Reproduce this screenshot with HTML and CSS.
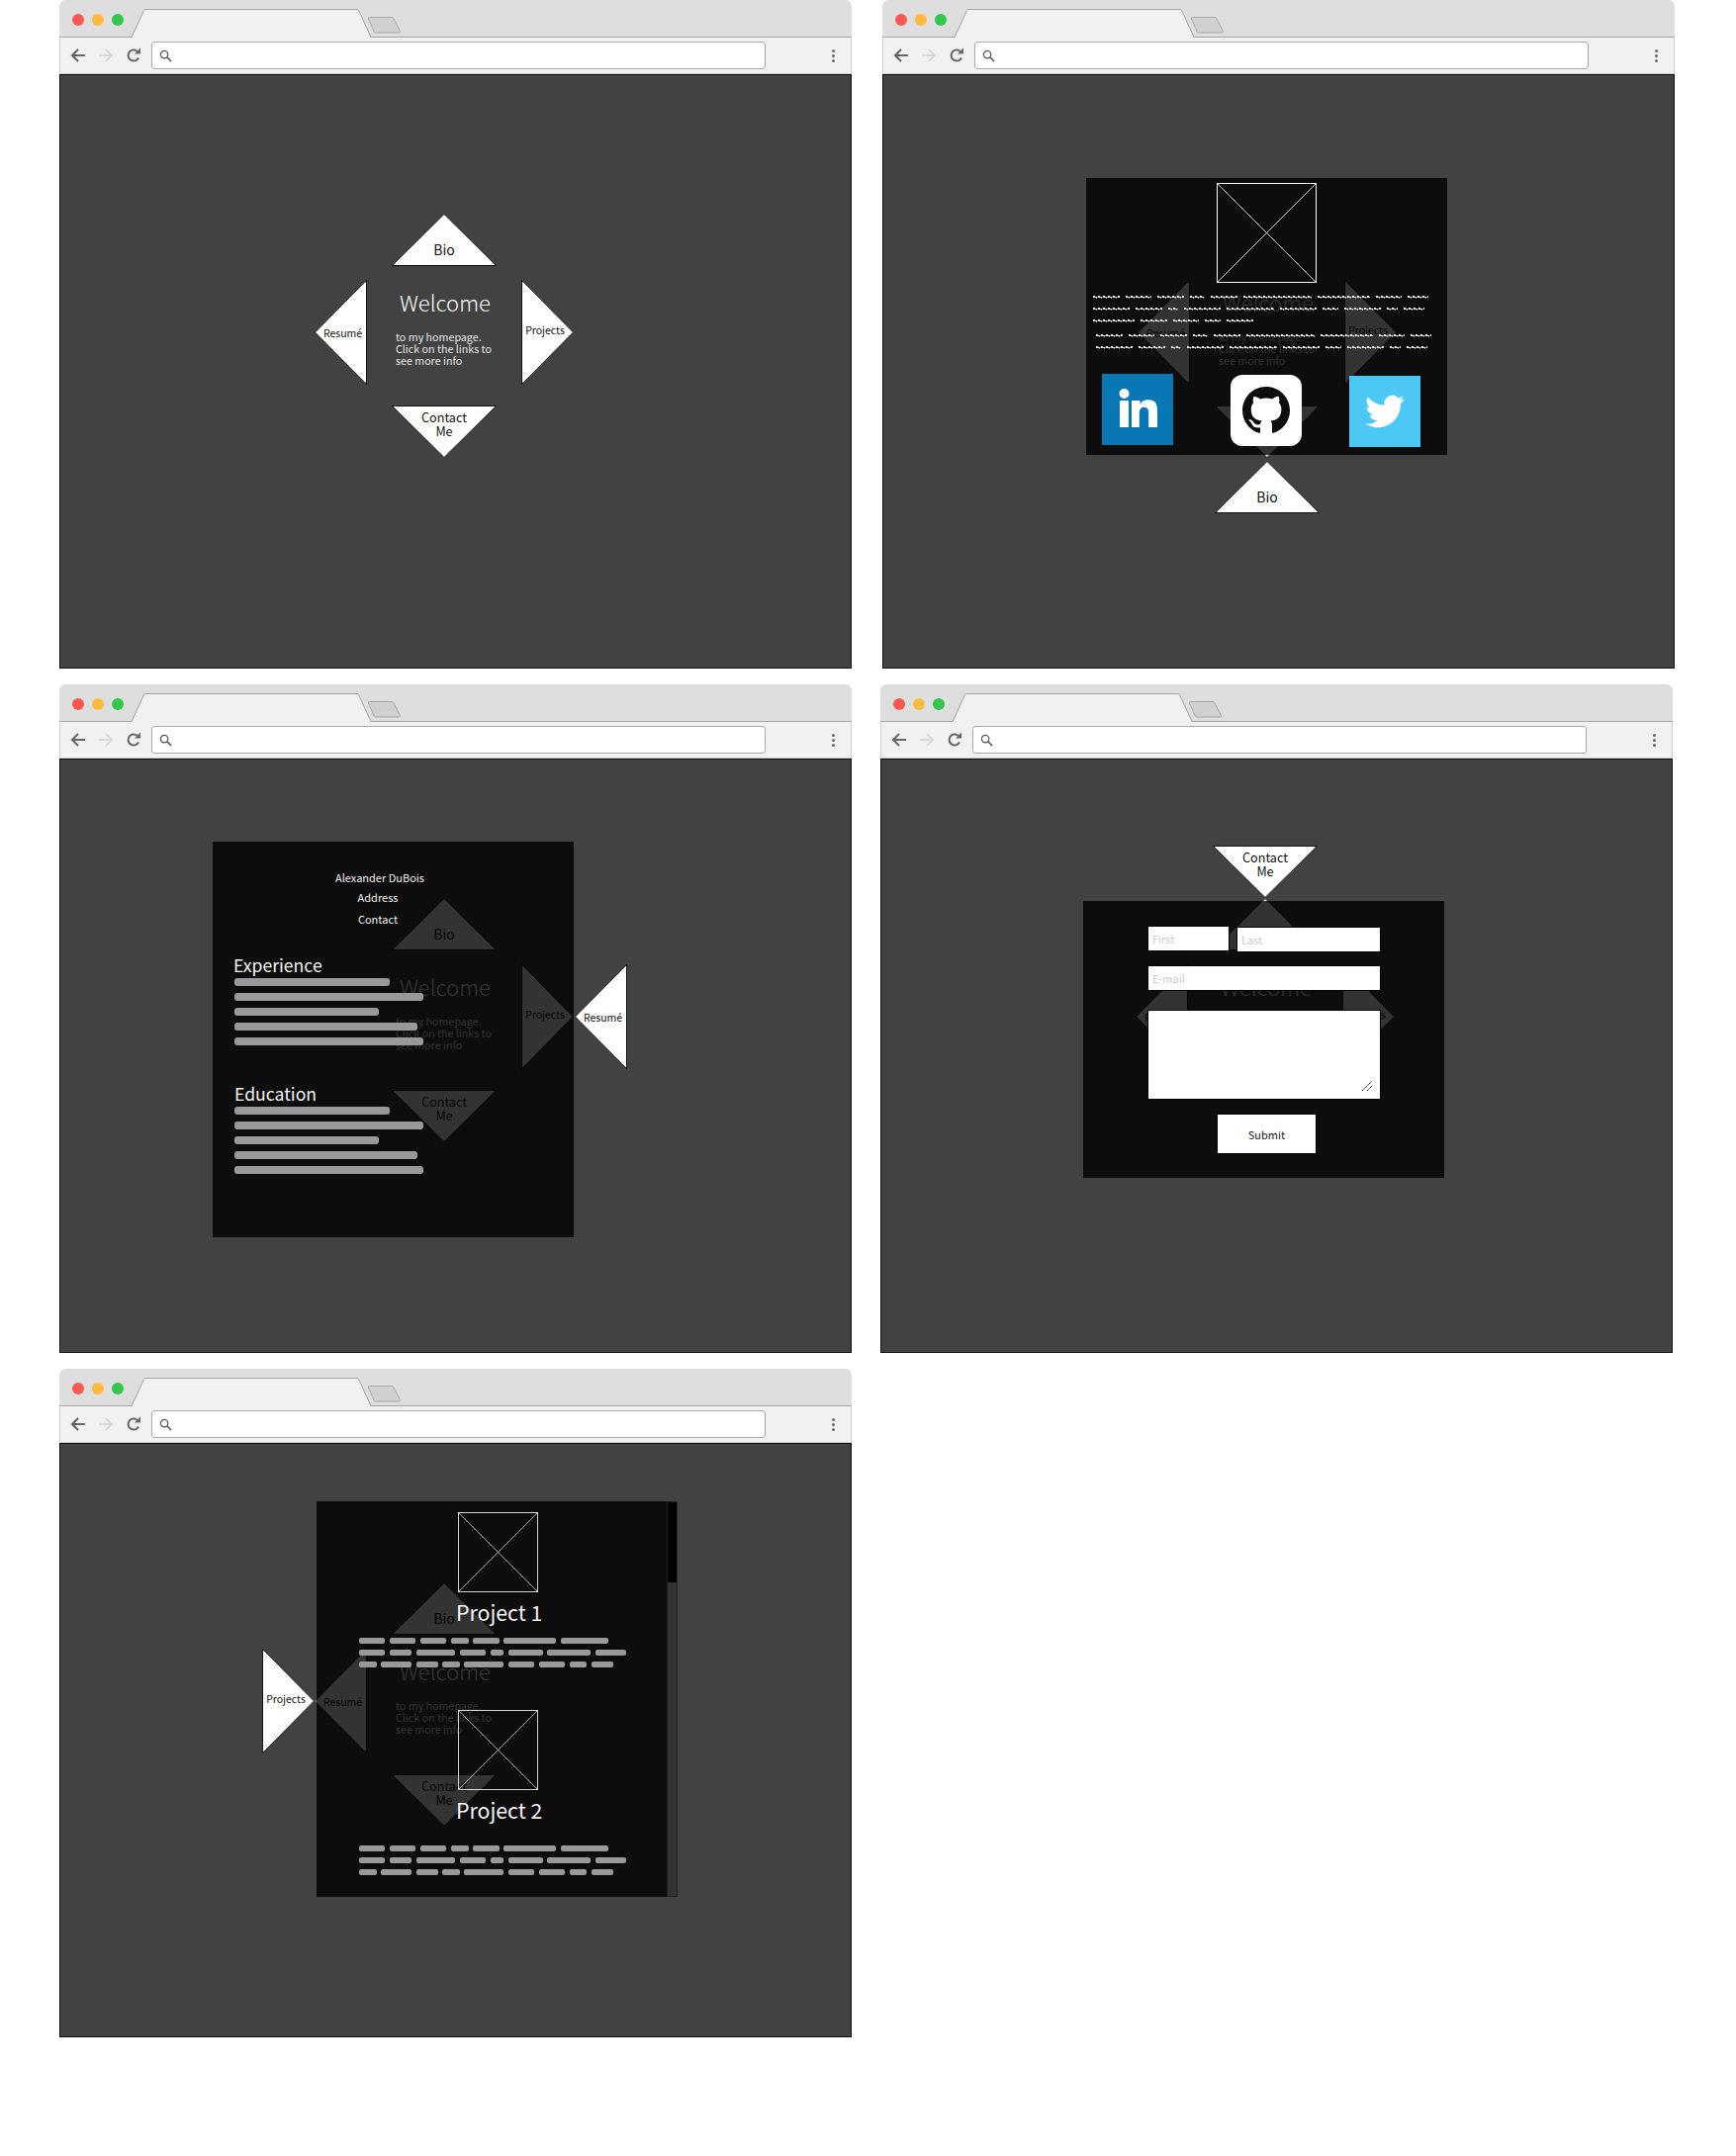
FILE: index.html
```html
<!DOCTYPE html>
<html lang="en">
<head>
  <meta charset="UTF-8">
  <title>Homepage wireframes</title>
  <meta name="viewport" content="width=device-width, initial-scale=1.0">
  <link rel="stylesheet" href="styles.css">
</head>
<body>

  <svg class="defs" width="0" height="0">
    <symbol id="tab" viewBox="0 0 280 29">
      <path d="M3 29L15.5 1.5Q16 .5 17 .5H231Q232 .5 232.500 1.500L245 29Z" fill="#f1f1f1"/>
      <path d="M0 28.500H3L15.500 1.500Q16 .5 17 .5H231Q232 .5 232.500 1.500L245 28.500H280" fill="none" stroke="#a3a3a3"/>
      <path d="M243.500 8.500H266Q267.500 8.500 268 10L274.500 22.500Q275 24 273.500 24H250Q248.500 24 248 22.500L242.500 10Q242 8.500 243.500 8.500Z" fill="#d0d0d0" stroke="#a8a8a8"/>
    </symbol>
    <symbol id="arrow" viewBox="0 0 16 14">
      <path d="M15 7H2M8 1L2 7L8 13" fill="none" stroke="currentColor" stroke-width="2"/>
    </symbol>
    <symbol id="reload" viewBox="0 0 16 16">
      <path d="M13 10.500A5.500 5.500 0 1 1 11.800 4" fill="none" stroke="currentColor" stroke-width="2"/>
      <path d="M9 6.500H15V.5Z" fill="currentColor"/>
    </symbol>
    <symbol id="search" viewBox="0 0 14 14">
      <circle cx="5.500" cy="5.500" r="4" fill="none" stroke="currentColor" stroke-width="1.300"/>
      <path d="M8.500 8.500L13 13" stroke="currentColor" stroke-width="1.600"/>
    </symbol>
    <symbol id="tri-up" viewBox="0 0 106 54">
      <polygon points="53,.5 105.500,52.500 .5,52.500" fill="#fff" stroke="#222"/>
      <path d="M.5 52.500H105.500" stroke="#000" stroke-dasharray="1 1"/>
    </symbol>
    <symbol id="tri-down" viewBox="0 0 106 54">
      <polygon points=".5,.5 105.500,.5 53,52.500" fill="#fff" stroke="#222"/>
      <path d="M.5 .5H105.500" stroke="#000" stroke-dasharray="1 1"/>
    </symbol>
    <symbol id="tri-left" viewBox="0 0 54 106">
      <polygon points=".5,53 52.500,.5 52.500,105.500" fill="#fff" stroke="#222"/>
      <path d="M52.500 .5V105.500" stroke="#000" stroke-dasharray="1 1"/>
    </symbol>
    <symbol id="tri-right" viewBox="0 0 54 106">
      <polygon points=".5,.5 52.500,53 .5,105.500" fill="#fff" stroke="#222"/>
      <path d="M.5 .5V105.500" stroke="#000" stroke-dasharray="1 1"/>
    </symbol>
    <symbol id="placeholder" viewBox="0 0 100 100">
      <rect x=".5" y=".5" width="99" height="99" fill="none" stroke="#fff"/>
      <path d="M0 0L100 100M100 0L0 100" stroke="#fff" stroke-width=".8"/>
    </symbol>
  </svg>

  <div class="sheet">

    <!-- home -->
    <section class="window">
      <div class="titlebar">
        <i class="dot dot-red"></i><i class="dot dot-yellow"></i><i class="dot dot-green"></i>
        <svg class="tab"><use href="#tab"/></svg>
      </div>
      <div class="toolbar">
        <svg class="ico back"><use href="#arrow"/></svg>
        <svg class="ico forward"><use href="#arrow"/></svg>
        <svg class="ico reload"><use href="#reload"/></svg>
        <div class="address"><svg class="ico-search"><use href="#search"/></svg></div>
        <div class="menu"><i></i><i></i><i></i></div>
      </div>
      <div class="viewport">
        <div class="home">
          <div class="intro">
            <h1>Welcome</h1>
            <p>to my homepage.<br>Click on the links to<br>see more info</p>
          </div>
          <a class="tri tri-bio"><svg><use href="#tri-up"/></svg><span>Bio</span></a>
          <a class="tri tri-resume"><svg><use href="#tri-left"/></svg><span>Resumé</span></a>
          <a class="tri tri-projects"><svg><use href="#tri-right"/></svg><span>Projects</span></a>
          <a class="tri tri-contact"><svg><use href="#tri-down"/></svg><span>Contact<br>Me</span></a>
        </div>
      </div>
    </section>

    <!-- bio -->
    <section class="window">
      <div class="titlebar">
        <i class="dot dot-red"></i><i class="dot dot-yellow"></i><i class="dot dot-green"></i>
        <svg class="tab"><use href="#tab"/></svg>
      </div>
      <div class="toolbar">
        <svg class="ico back"><use href="#arrow"/></svg>
        <svg class="ico forward"><use href="#arrow"/></svg>
        <svg class="ico reload"><use href="#reload"/></svg>
        <div class="address"><svg class="ico-search"><use href="#search"/></svg></div>
        <div class="menu"><i></i><i></i><i></i></div>
      </div>
      <div class="viewport">
        <div class="home">
          <div class="intro">
            <h1>Welcome</h1>
            <p>to my homepage.<br>Click on the links to<br>see more info</p>
          </div>
          <a class="tri tri-resume"><svg><use href="#tri-left"/></svg><span>Resumé</span></a>
          <a class="tri tri-projects"><svg><use href="#tri-right"/></svg><span>Projects</span></a>
          <a class="tri tri-contact"><svg><use href="#tri-down"/></svg><span>Contact<br>Me</span></a>
        </div>
        <div class="panel panel-bio">
          <svg class="bio-photo"><use href="#placeholder"/></svg>
          <div class="scribble">
            <div class="line"><b class="w5"></b><b class="w5"></b><b class="w5"></b><b class="w3"></b><b class="w5"></b><b class="w13"></b><b class="w10"></b><b class="w5"></b><b class="w4"></b></div>
            <div class="line"><b class="w7"></b><b class="w5"></b><b class="w2"></b><b class="w7"></b><b class="w9"></b><b class="w7"></b><b class="w3"></b><b class="w7"></b><b class="w2"></b><b class="w4"></b></div>
            <div class="line"><b class="w8"></b><b class="w5"></b><b class="w5"></b><b class="w3"></b><b class="w5"></b></div>
          </div>
          <div class="scribble scribble-second">
            <div class="line"><b class="w5"></b><b class="w5"></b><b class="w5"></b><b class="w3"></b><b class="w5"></b><b class="w13"></b><b class="w10"></b><b class="w5"></b><b class="w4"></b></div>
            <div class="line"><b class="w7"></b><b class="w5"></b><b class="w2"></b><b class="w7"></b><b class="w9"></b><b class="w7"></b><b class="w3"></b><b class="w7"></b><b class="w2"></b><b class="w4"></b></div>
          </div>
          <div class="socials">
            <svg class="social" viewBox="0 0 72 72">
              <rect width="72" height="72" fill="#0a77b5"/>
              <circle cx="22.500" cy="20" r="5" fill="#fff"/>
              <rect x="18" y="27" width="9" height="27" fill="#fff"/>
              <path d="M30 27h8.500v3.700c1.200-2.300 4-4.400 8.200-4.400 8.800 0 9.300 5.800 9.300 13.300V54h-8.800V41c0-3.200-.1-7.200-4.400-7.200s-5 3.400-5 7V54H30z" fill="#fff"/>
            </svg>
            <div class="social github">
              <svg viewBox="0 0 16 16"><path d="M8 0C3.580 0 0 3.580 0 8c0 3.540 2.290 6.530 5.470 7.590.4.070.55-.17.55-.38 0-.19-.01-.82-.01-1.490-2.010.37-2.530-.49-2.690-.94-.09-.23-.48-.94-.82-1.130-.28-.15-.68-.52-.01-.53.63-.01 1.080.58 1.230.82.72 1.210 1.870.87 2.330.66.070-.52.28-.87.51-1.070-1.780-.2-3.640-.89-3.640-3.950 0-.87.31-1.590.82-2.150-.08-.2-.36-1.020.08-2.120 0 0 .67-.21 2.200.82.64-.18 1.320-.27 2-.27.68 0 1.360.09 2 .27 1.530-1.040 2.200-.82 2.200-.82.44 1.100.16 1.920.08 2.120.51.56.82 1.270.82 2.150 0 3.070-1.870 3.750-3.650 3.950.29.25.54.73.54 1.480 0 1.070-.01 1.930-.01 2.200 0 .21.15.46.55.38A8.013 8.013 0 0016 8c0-4.420-3.580-8-8-8z" fill="#0d0d0d"/></svg>
            </div>
            <div class="social twitter">
              <svg viewBox="0 0 24 24"><path d="M23.953 4.570a10 10 0 01-2.825.775 4.958 4.958 0 002.163-2.723c-.951.555-2.005.959-3.127 1.184a4.920 4.920 0 00-8.384 4.482C7.690 8.095 4.067 6.130 1.640 3.162a4.822 4.822 0 00-.666 2.475c0 1.710.87 3.213 2.188 4.096a4.904 4.904 0 01-2.228-.616v.060a4.923 4.923 0 003.946 4.827 4.996 4.996 0 01-2.212.085 4.936 4.936 0 004.604 3.417 9.867 9.867 0 01-6.102 2.105c-.39 0-.779-.023-1.170-.067a13.995 13.995 0 007.557 2.209c9.053 0 13.998-7.496 13.998-13.985 0-.21 0-.42-.015-.63A9.935 9.935 0 0024 4.590z" fill="#fff"/></svg>
            </div>
          </div>
        </div>
        <a class="tri tri-bio tri-bio-open"><svg><use href="#tri-up"/></svg><span>Bio</span></a>
      </div>
    </section>

    <!-- resume -->
    <section class="window">
      <div class="titlebar">
        <i class="dot dot-red"></i><i class="dot dot-yellow"></i><i class="dot dot-green"></i>
        <svg class="tab"><use href="#tab"/></svg>
      </div>
      <div class="toolbar">
        <svg class="ico back"><use href="#arrow"/></svg>
        <svg class="ico forward"><use href="#arrow"/></svg>
        <svg class="ico reload"><use href="#reload"/></svg>
        <div class="address"><svg class="ico-search"><use href="#search"/></svg></div>
        <div class="menu"><i></i><i></i><i></i></div>
      </div>
      <div class="viewport">
        <div class="home">
          <div class="intro">
            <h1>Welcome</h1>
            <p>to my homepage.<br>Click on the links to<br>see more info</p>
          </div>
          <a class="tri tri-bio"><svg><use href="#tri-up"/></svg><span>Bio</span></a>
          <a class="tri tri-projects"><svg><use href="#tri-right"/></svg><span>Projects</span></a>
          <a class="tri tri-contact"><svg><use href="#tri-down"/></svg><span>Contact<br>Me</span></a>
        </div>
        <div class="panel panel-resume">
          <p class="cv-name">Alexander DuBois</p>
          <p class="cv-line">Address</p>
          <p class="cv-line cv-line-last">Contact</p>
          <h2 class="cv-first">Experience</h2>
          <div class="bars">
            <i class="bar-a"></i><i class="bar-b"></i><i class="bar-c"></i><i class="bar-d"></i><i class="bar-b"></i>
          </div>
          <h2 class="cv-next">Education</h2>
          <div class="bars">
            <i class="bar-a"></i><i class="bar-b"></i><i class="bar-c"></i><i class="bar-d"></i><i class="bar-b"></i>
          </div>
        </div>
        <a class="tri tri-resume tri-resume-open"><svg><use href="#tri-left"/></svg><span>Resumé</span></a>
      </div>
    </section>

    <!-- contact -->
    <section class="window window-shift">
      <div class="titlebar">
        <i class="dot dot-red"></i><i class="dot dot-yellow"></i><i class="dot dot-green"></i>
        <svg class="tab"><use href="#tab"/></svg>
      </div>
      <div class="toolbar">
        <svg class="ico back"><use href="#arrow"/></svg>
        <svg class="ico forward"><use href="#arrow"/></svg>
        <svg class="ico reload"><use href="#reload"/></svg>
        <div class="address"><svg class="ico-search"><use href="#search"/></svg></div>
        <div class="menu"><i></i><i></i><i></i></div>
      </div>
      <div class="viewport">
        <div class="home">
          <div class="intro">
            <h1>Welcome</h1>
            <p>to my homepage.<br>Click on the links to<br>see more info</p>
          </div>
          <a class="tri tri-bio"><svg><use href="#tri-up"/></svg><span>Bio</span></a>
          <a class="tri tri-resume"><svg><use href="#tri-left"/></svg><span>Resumé</span></a>
          <a class="tri tri-projects"><svg><use href="#tri-right"/></svg><span>Projects</span></a>
        </div>
        <form class="panel panel-contact">
          <div class="name-row">
            <input class="first" type="text" placeholder="First">
            <input class="last" type="text" placeholder="Last">
          </div>
          <input class="email" type="text" placeholder="E-mail">
          <div class="message-box">
            <textarea class="message"></textarea>
            <svg class="grip" viewBox="0 0 10 10"><path d="M0 10L10 0M5 10L10 5" stroke="#000" stroke-dasharray="1.400 .6"/></svg>
          </div>
          <button class="submit" type="button">Submit</button>
        </form>
        <a class="tri tri-contact tri-contact-open"><svg><use href="#tri-down"/></svg><span>Contact<br>Me</span></a>
      </div>
    </section>

    <!-- projects -->
    <section class="window">
      <div class="titlebar">
        <i class="dot dot-red"></i><i class="dot dot-yellow"></i><i class="dot dot-green"></i>
        <svg class="tab"><use href="#tab"/></svg>
      </div>
      <div class="toolbar">
        <svg class="ico back"><use href="#arrow"/></svg>
        <svg class="ico forward"><use href="#arrow"/></svg>
        <svg class="ico reload"><use href="#reload"/></svg>
        <div class="address"><svg class="ico-search"><use href="#search"/></svg></div>
        <div class="menu"><i></i><i></i><i></i></div>
      </div>
      <div class="viewport">
        <div class="home">
          <div class="intro">
            <h1>Welcome</h1>
            <p>to my homepage.<br>Click on the links to<br>see more info</p>
          </div>
          <a class="tri tri-bio"><svg><use href="#tri-up"/></svg><span>Bio</span></a>
          <a class="tri tri-resume"><svg><use href="#tri-left"/></svg><span>Resumé</span></a>
          <a class="tri tri-contact"><svg><use href="#tri-down"/></svg><span>Contact<br>Me</span></a>
        </div>
        <div class="panel panel-projects">
          <div class="project-list">
            <div class="project">
              <svg class="project-photo"><use href="#placeholder"/></svg>
              <h3>Project 1</h3>
              <div class="blurb">
                <div class="line"><b class="w6"></b><b class="w6"></b><b class="w6"></b><b class="w4"></b><b class="w6"></b><b class="w12"></b><b class="w11"></b></div>
                <div class="line"><b class="w6"></b><b class="w5"></b><b class="w9"></b><b class="w6"></b><b class="w3"></b><b class="w8"></b><b class="w10"></b><b class="w7"></b></div>
                <div class="line"><b class="w4"></b><b class="w7"></b><b class="w5"></b><b class="w4"></b><b class="w9"></b><b class="w6"></b><b class="w6"></b><b class="w4"></b><b class="w5"></b></div>
              </div>
            </div>
            <div class="project project-next">
              <svg class="project-photo"><use href="#placeholder"/></svg>
              <h3>Project 2</h3>
              <div class="blurb">
                <div class="line"><b class="w6"></b><b class="w6"></b><b class="w6"></b><b class="w4"></b><b class="w6"></b><b class="w12"></b><b class="w11"></b></div>
                <div class="line"><b class="w6"></b><b class="w5"></b><b class="w9"></b><b class="w6"></b><b class="w3"></b><b class="w8"></b><b class="w10"></b><b class="w7"></b></div>
                <div class="line"><b class="w4"></b><b class="w7"></b><b class="w5"></b><b class="w4"></b><b class="w9"></b><b class="w6"></b><b class="w6"></b><b class="w4"></b><b class="w5"></b></div>
              </div>
            </div>
          </div>
          <div class="scrollbar"><i></i></div>
        </div>
        <a class="tri tri-projects tri-projects-open"><svg><use href="#tri-right"/></svg><span>Projects</span></a>
      </div>
    </section>

  </div>

</body>
</html>
```

FILE: styles.css
```css
* {
  box-sizing: border-box;
}

body {
  margin: 0;
  background: white;
  font-family: "Noto Sans CJK JP", "Noto Sans", sans-serif;
}

.defs {
  position: absolute;
}

.sheet {
  display: grid;
  grid-template-columns: 801px 801px;
  column-gap: 31px;
  row-gap: 16px;
  padding-left: 60px;
}

.window {
  width: 801px;
  height: 676px;
  display: flex;
  flex-direction: column;
}

.window-shift {
  margin-left: -2px;
}

/* browser chrome */

.titlebar {
  height: 38px;
  flex: none;
  display: flex;
  align-items: center;
  gap: 8px;
  padding: 2px 0 0 13px;
  background: #dedede;
  border-bottom: 1px solid #a8a8a8;
  border-radius: 6px 6px 0 0;
}

.dot {
  width: 12px;
  height: 12px;
  flex: none;
  border-radius: 50%;
}

.dot-red { background: #fc5753; }
.dot-yellow { background: #fdbc40; }
.dot-green { background: #33c748; }

.tab {
  width: 280px;
  height: 29px;
  flex: none;
  align-self: flex-end;
  margin: 0 0 -1px -3px;
}

.toolbar {
  height: 37px;
  flex: none;
  display: flex;
  align-items: center;
  padding: 0 0 0 11px;
  background: #f1f1f1;
  border-left: 1px solid #d0d0d0;
  border-right: 1px solid #d0d0d0;
  border-bottom: 1px solid #ccc;
  color: #666;
}

.ico {
  flex: none;
  width: 16px;
  height: 14px;
}

.forward {
  margin-left: 12px;
  color: #d8d8d8;
  transform: scaleX(-1);
}

.back {
  margin-left: -1px;
}

.reload {
  width: 16px;
  height: 16px;
  margin-left: 12px;
}

.address {
  width: 621px;
  height: 28px;
  margin-left: 10px;
  display: flex;
  align-items: center;
  padding-left: 7px;
  background: white;
  border: 1px solid #aaa;
  border-radius: 3px;
}

.ico-search {
  width: 13px;
  height: 13px;
  color: #555;
}

.menu {
  margin-left: 67px;
  display: flex;
  flex-direction: column;
  gap: 2px;
}

.menu i {
  width: 3px;
  height: 3px;
  border-radius: 50%;
  background: #666;
}

.viewport {
  flex: 1;
  position: relative;
  display: flex;
  align-items: flex-start;
  background: #424242;
  border: 1px solid #111;
  color: white;
}

/* the diamond menu, laid out like a diagram */

.home {
  position: absolute;
  inset: 0;
}

.intro {
  position: absolute;
  left: 339px;
  top: 212px;
  width: 110px;
  color: #e6e6e6;
}

.intro h1 {
  margin: 0 0 0 4px;
  font-size: 22px;
  font-weight: 300;
  line-height: 34px;
  color: #fff;
}

.intro p {
  margin: 13px 0 0;
  font-size: 10.7px;
  line-height: 12px;
  white-space: nowrap;
}

.tri {
  position: absolute;
  display: flex;
  align-items: center;
  justify-content: center;
  color: #111;
  text-align: center;
  font-size: 10.5px;
  line-height: 14px;
}

.tri svg {
  position: absolute;
  left: 0;
  top: 0;
  width: 100%;
  height: 100%;
}

.tri span {
  position: relative;
}

.tri-bio,
.tri-contact {
  width: 106px;
  height: 54px;
  left: 335px;
}

.tri-resume,
.tri-projects {
  width: 54px;
  height: 106px;
  top: 207px;
}

.tri-bio {
  top: 140px;
  padding-top: 18px;
  font-size: 14px;
}

.tri-contact {
  top: 334px;
  padding-bottom: 16px;
  font-size: 12.6px;
}

.tri-resume {
  left: 257px;
  padding-left: 3px;
  padding-top: 2px;
}

.tri-projects {
  left: 466px;
  padding-right: 6px;
  padding-bottom: 4px;
}

.tri-bio-open { top: 390px; z-index: 2; }
.tri-resume-open { left: 520px; z-index: 2; }
.tri-contact-open { top: 87px; z-index: 2; }
.tri-projects-open { left: 204px; z-index: 2; }

/* dark panels */

.panel {
  position: relative;
  z-index: 1;
  width: 365px;
  flex: none;
  background: rgba(0, 0, 0, 0.8);
}

.panel-bio {
  height: 280px;
  margin: 104px 0 0 205px;
}

.panel-resume {
  height: 400px;
  margin: 83px 0 0 154px;
  padding: 26px 0 0 22px;
}

.panel-contact {
  height: 280px;
  margin: 143px 0 0 204px;
  padding: 25px 0 0 65px;
}

.panel-projects {
  height: 400px;
  margin: 58px 0 0 259px;
  display: flex;
}

/* bio */

.bio-photo {
  display: block;
  width: 101px;
  height: 101px;
  margin: 5px 0 0 132px;
}

.scribble {
  margin: 13px 0 0 7px;
}

.scribble-second {
  margin: 12px 0 0 10px;
}

.line {
  display: flex;
}

.scribble .line {
  height: 3px;
  gap: 6px;
  margin-bottom: 9px;
  --unit: 5.3px;
}

/* unreadable wavy lines stand in for the bio text */
.scribble b {
  height: 3px;
  background:
    repeating-linear-gradient(90deg, #fff 0 2px, transparent 2px 5px) 0 0 / 100% 1px no-repeat,
    repeating-linear-gradient(90deg, #ddd 0 4px, #777 4px 5px) 0 1px / 100% 1px no-repeat,
    repeating-linear-gradient(90deg, transparent 0 3px, #999 3px 4px, transparent 4px 5px) 0 2px / 100% 1px no-repeat;
}

.w2 { width: calc(var(--unit) * 2); }
.w3 { width: calc(var(--unit) * 3); }
.w4 { width: calc(var(--unit) * 4); }
.w5 { width: calc(var(--unit) * 5); }
.w6 { width: calc(var(--unit) * 6); }
.w7 { width: calc(var(--unit) * 7); }
.w8 { width: calc(var(--unit) * 8); }
.w9 { width: calc(var(--unit) * 9); }
.w10 { width: calc(var(--unit) * 10); }
.w11 { width: calc(var(--unit) * 11); }
.w12 { width: calc(var(--unit) * 12); }
.w13 { width: calc(var(--unit) * 13); }

.socials {
  display: flex;
  align-items: flex-start;
  margin: 25px 0 0 16px;
}

.social {
  display: block;
  flex: none;
  width: 72px;
  height: 72px;
}

.github {
  margin: 1px 0 0 58px;
  display: flex;
  align-items: center;
  justify-content: center;
  background: white;
  border-radius: 12px;
}

.github svg {
  width: 48px;
  height: 48px;
}

.twitter {
  margin: 2px 0 0 48px;
  display: flex;
  align-items: center;
  justify-content: center;
  background: #4cc8f4;
}

.twitter svg {
  width: 40px;
  height: 40px;
}

/* resume */

.cv-name,
.cv-line {
  margin: 0;
  width: 290px;
  text-align: center;
  font-size: 11px;
  line-height: 20px;
  color: #eee;
}

.cv-name {
  padding-left: 4px;
}

.cv-line-last {
  margin-top: 2px;
}

.panel-resume h2 {
  margin: 0 0 2px;
  font-size: 17.600px;
  font-weight: 400;
  line-height: 22px;
  color: #f4f4f4;
}

.panel-resume .cv-first {
  margin: 26px 0 2px -1px;
}

.panel-resume .cv-next {
  margin-top: 38px;
}

.bars {
  display: flex;
  flex-direction: column;
  align-items: flex-start;
  gap: 7px;
}

.bars i {
  height: 8px;
  border-radius: 3px;
  background: #999;
}

.bar-a { width: 157px; }
.bar-b { width: 191px; }
.bar-c { width: 146px; }
.bar-d { width: 185px; }

/* contact form */

.name-row {
  display: flex;
  align-items: flex-start;
  gap: 7px;
}

.panel-contact input,
.panel-contact textarea {
  display: block;
  padding: 0 4px;
  background: white;
  border: 1px solid black;
  border-radius: 0;
  font-family: inherit;
  font-size: 11px;
}

.panel-contact input {
  height: 26px;
}

.panel-contact input::placeholder {
  color: #ccc;
}

.first {
  width: 83px;
}

.last {
  width: 146px;
  margin-top: 1px;
}

.email {
  width: 236px;
  margin-top: 13px;
}

.message-box {
  position: relative;
  width: 236px;
  height: 91px;
  margin-top: 19px;
}

.message {
  width: 236px;
  height: 91px;
  resize: none;
}

.grip {
  position: absolute;
  right: 9px;
  bottom: 9px;
  width: 10px;
  height: 10px;
}

.submit {
  display: block;
  width: 101px;
  height: 41px;
  margin: 14px 0 0 70px;
  background: white;
  border: 1px solid black;
  color: #222;
  font-family: inherit;
  font-size: 11px;
}

/* projects */

.project-list {
  flex: 1;
  padding-top: 11px;
}

.project-photo {
  display: block;
  width: 81px;
  height: 81px;
  margin-left: 143px;
}

.project h3 {
  margin: 5px 0 0 141px;
  font-size: 21.300px;
  font-weight: 400;
  line-height: 30px;
  color: #f4f4f4;
  white-space: nowrap;
}

.blurb {
  display: flex;
  flex-direction: column;
  gap: 6px;
  margin: 11px 0 0 43px;
  --unit: 4.4px;
}

.blurb .line {
  gap: 4.6px;
}

.blurb b {
  height: 6px;
  border-radius: 2px;
  background: #999;
}

.project-next {
  margin-top: 43px;
}

.project-next .blurb {
  margin-top: 21px;
}

.scrollbar {
  width: 11px;
  flex: none;
  background: #333;
  border: 1px solid #222;
}

.scrollbar i {
  display: block;
  height: 81px;
  background: black;
}
```
